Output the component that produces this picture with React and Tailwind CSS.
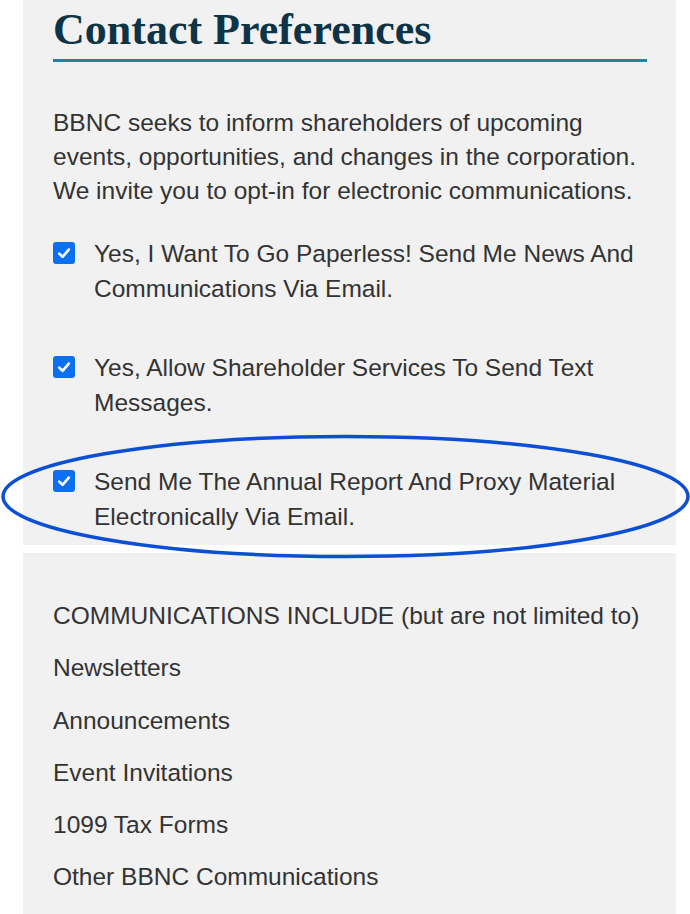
import React from "react";

function Check() {
  return (
    <span className="mt-[6px] flex h-[22px] w-[22px] shrink-0 items-center justify-center rounded-[3px] bg-[#0b6ff2]">
      <svg width="16" height="16" viewBox="0 0 16 16" fill="none">
        <path d="M3.2 8.6 L6.6 11.8 L12.8 4.6" stroke="white" strokeWidth="2.6" strokeLinecap="round" strokeLinejoin="round" />
      </svg>
    </span>
  );
}

const items = [
  "Yes, I Want To Go Paperless! Send Me News And Communications Via Email.",
  "Yes, Allow Shareholder Services To Send Text Messages.",
  "Send Me The Annual Report And Proxy Material Electronically Via Email.",
];

const comms = [
  "COMMUNICATIONS INCLUDE (but are not limited to)",
  "Newsletters",
  "Announcements",
  "Event Invitations",
  "1099 Tax Forms",
  "Other BBNC Communications",
];

export default function App() {
  return (
    <div className="relative min-h-[914px] w-[690px] overflow-hidden bg-white font-['Liberation_Sans'] text-[#333333]">
      <div className="ml-[23px] w-[653px] bg-[#f1f1f1] pb-[11px] pl-[30px] pr-[29px]">
        <h2 className="pt-[6px] font-['Liberation_Serif'] text-[44px] font-bold leading-[48px] text-[#0d3446]">
          Contact Preferences
        </h2>
        <div className="mt-[5px] h-[3px] bg-[#2480a4]" />
        <p className="mt-[44px] font-['Liberation_Sans'] text-[24.5px] leading-[34px]">
          BBNC seeks to inform shareholders of upcoming events, opportunities, and changes in the corporation. We invite you to opt-in for electronic communications.
        </p>
        <div className="mt-[28px] flex flex-col gap-[44px]">
          {items.map((t) => (
            <label key={t} className="flex items-start gap-[19px]">
              <Check />
              <span className="font-['Liberation_Sans'] text-[24.5px] leading-[35px]">{t}</span>
            </label>
          ))}
        </div>
      </div>
      <div className="ml-[23px] mt-[8px] min-h-[362px] w-[653px] bg-[#f1f1f1] pl-[30px] pt-[46px]">
        <div className="flex flex-col gap-[18.3px]">
          {comms.map((c) => (
            <p key={c} className="font-['Liberation_Sans'] text-[24.5px] leading-[34px]">{c}</p>
          ))}
        </div>
      </div>
      <svg className="pointer-events-none absolute left-0 top-[430px]" width="690" height="135" viewBox="0 430 690 135">
        <ellipse cx="345.5" cy="496.5" rx="342.5" ry="60" fill="none" stroke="#0b4fd4" strokeWidth="3.5" />
      </svg>
    </div>
  );
}
